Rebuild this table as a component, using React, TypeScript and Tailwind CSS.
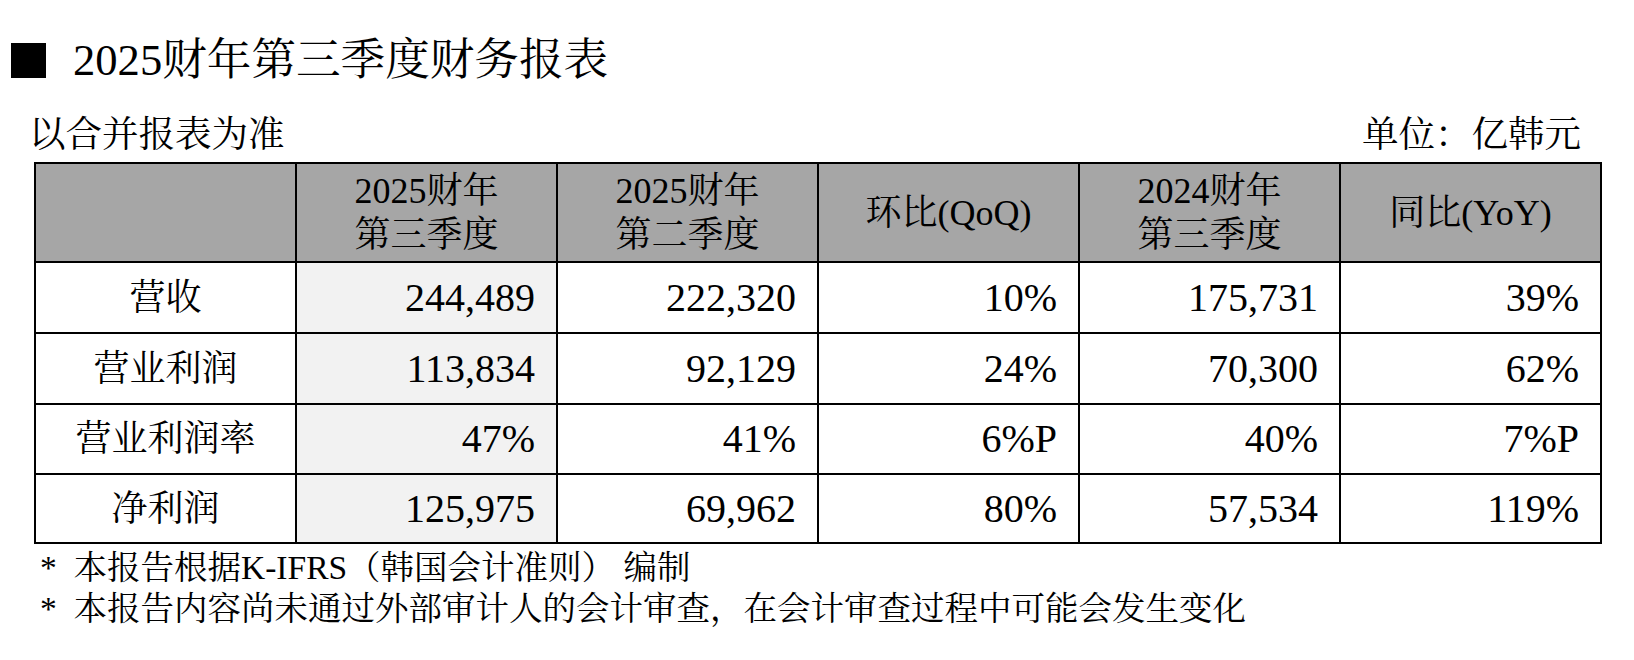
import React from 'react'

const FONT = "font-['Liberation_Serif','Noto_Serif_CJK_SC','Noto_Sans_CJK_SC',serif]"

interface Row {
  label: string
  values: string[]
  height: string
}

const headers: string[][] = [
  [],
  ['2025财年', '第三季度'],
  ['2025财年', '第二季度'],
  ['环比(QoQ)'],
  ['2024财年', '第三季度'],
  ['同比(YoY)'],
]

const rows: Row[] = [
  { label: '营收', values: ['244,489', '222,320', '10%', '175,731', '39%'], height: 'h-[71px]' },
  { label: '营业利润', values: ['113,834', '92,129', '24%', '70,300', '62%'], height: 'h-[71px]' },
  { label: '营业利润率', values: ['47%', '41%', '6%P', '40%', '7%P'], height: 'h-[70px]' },
  { label: '净利润', values: ['125,975', '69,962', '80%', '57,534', '119%'], height: 'h-[69px]' },
]

export default function App() {
  return (
    <div className={`w-[1634px] h-[660px] bg-white text-black overflow-hidden ${FONT}`}>
      {/* Title */}
      <div className="flex items-center pt-[36px] h-[84px] pl-[11px]">
        <div className="w-[35px] h-[35px] bg-black" />
        <h1 className="ml-[27px] text-[44.6px] leading-[50px] font-normal">2025财年第三季度财务报表</h1>
      </div>

      {/* Subtitle + unit */}
      <div className="flex justify-between items-center mt-[29px] h-[44px] pl-[29px] pr-[53px] text-[36.5px] leading-[44px]">
        <span>以合并报表为准</span>
        <span>单位：亿韩元</span>
      </div>

      {/* Table */}
      <table className="ml-[34px] mt-[5px] w-[1566px] table-fixed border-collapse border-2 border-black">
        <thead>
          <tr className="h-[99px] bg-[#a6a6a6]">
            {headers.map((lines, i) => (
              <th
                key={i}
                className="w-[261px] border-2 border-black text-center align-middle font-normal text-[36px] leading-[44px]"
              >
                {lines.map((l) => (
                  <div key={l}>{l}</div>
                ))}
              </th>
            ))}
          </tr>
        </thead>
        <tbody>
          {rows.map((row) => (
            <tr key={row.label} className={row.height}>
              <td className="border-2 border-black text-center align-middle text-[36px]">{row.label}</td>
              {row.values.map((v, i) => (
                <td
                  key={i}
                  className={`border-2 border-black text-right align-middle pr-[21px] text-[40px] ${
                    i === 0 ? 'bg-[#f2f2f2]' : 'bg-white'
                  }`}
                >
                  {v}
                </td>
              ))}
            </tr>
          ))}
        </tbody>
      </table>

      {/* Notes */}
      <div className="mt-[3px] pl-[40px] text-[33.5px] leading-[41px]">
        <p>*&nbsp;&nbsp;本报告根据K-IFRS（韩国会计准则）&nbsp;编制</p>
        <p>*&nbsp;&nbsp;本报告内容尚未通过外部审计人的会计审查，在会计审查过程中可能会发生变化</p>
      </div>
    </div>
  )
}
